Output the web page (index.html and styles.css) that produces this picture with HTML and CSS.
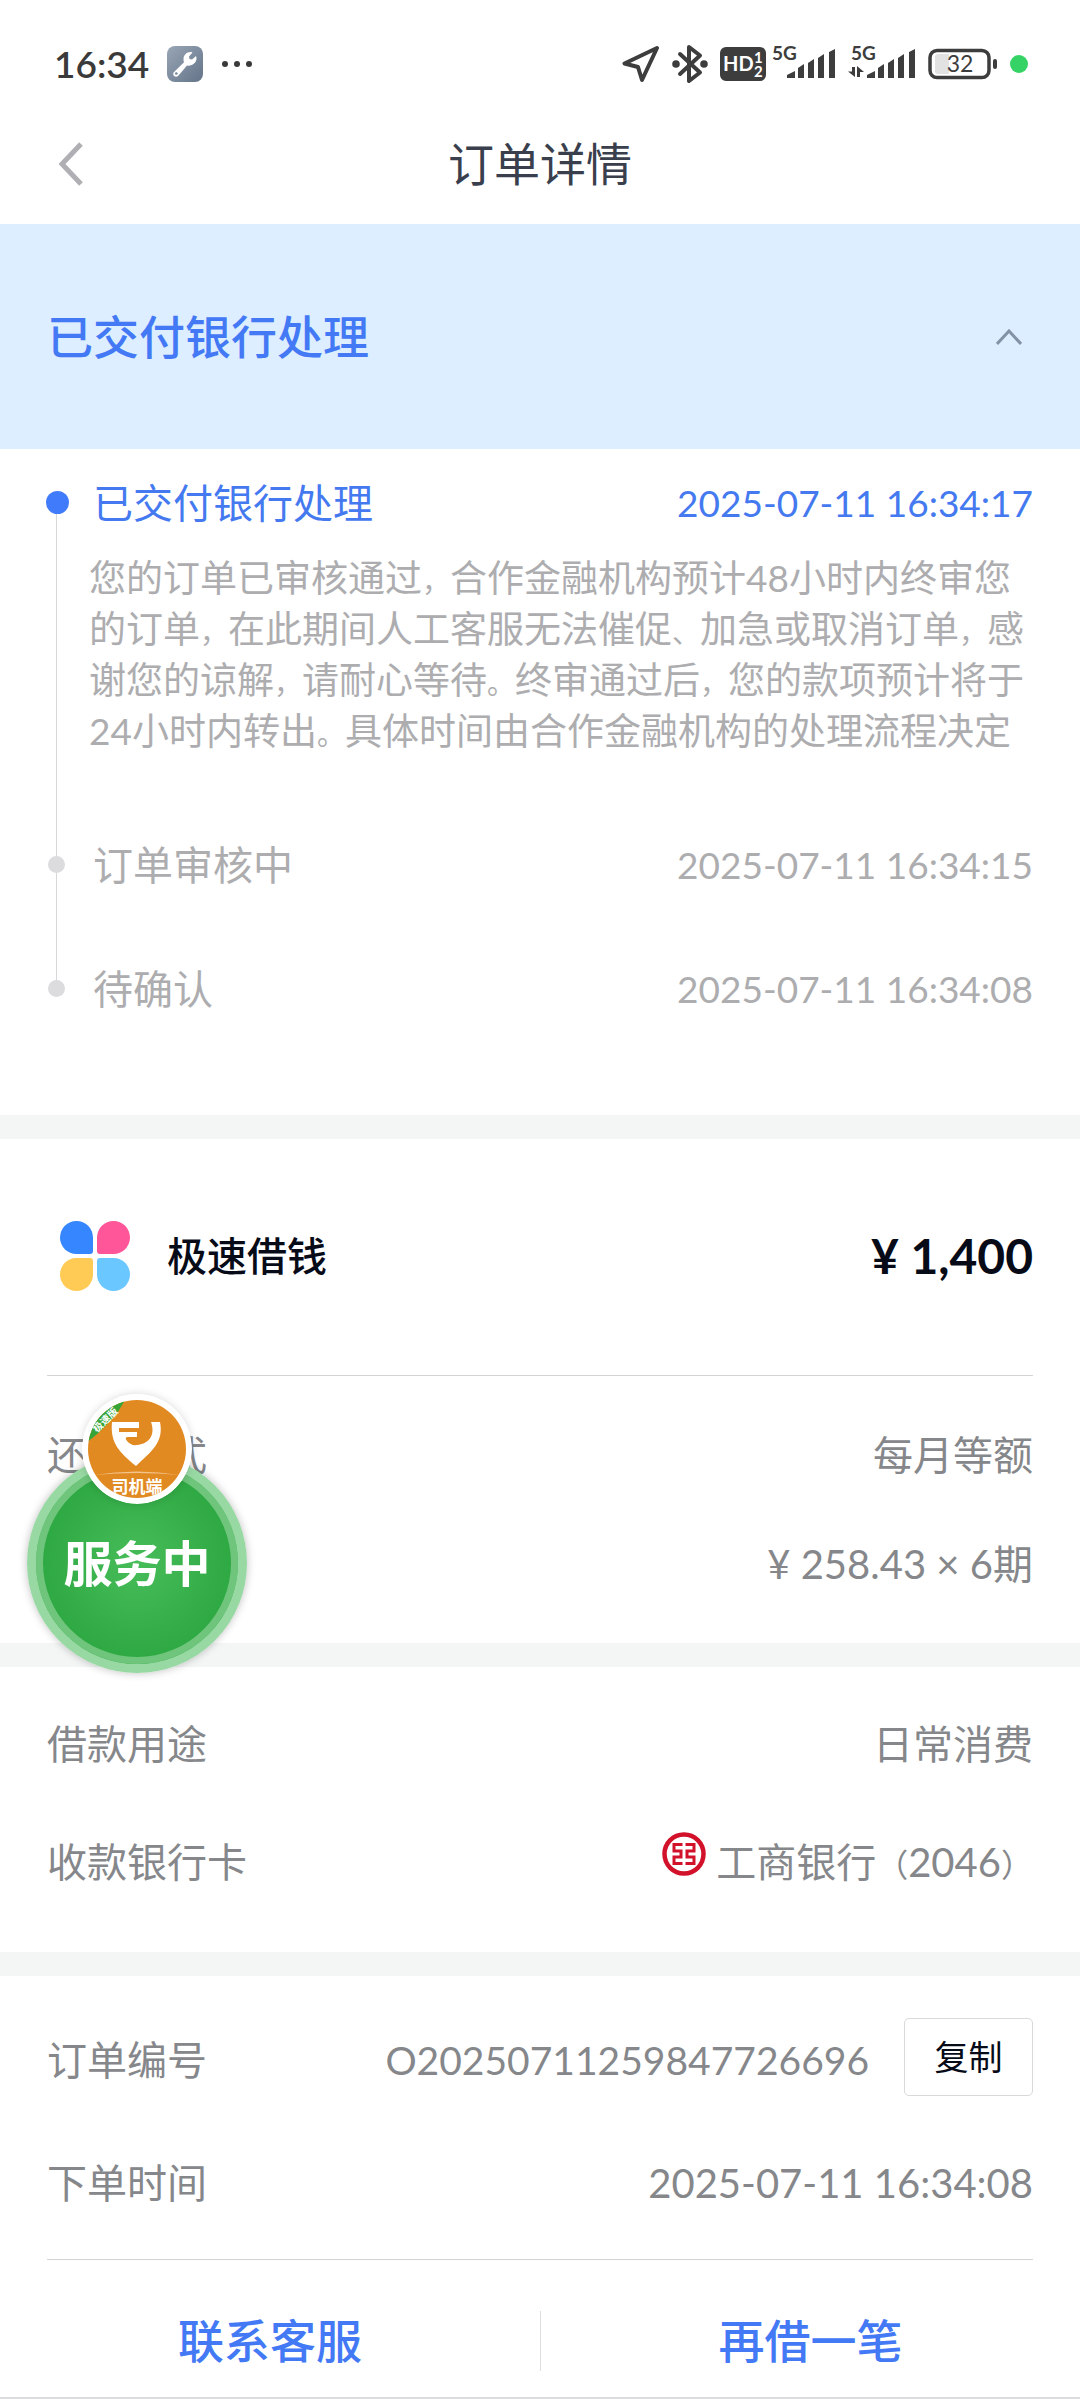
FILE: index.html
```html
<!DOCTYPE html>
<html lang="zh-CN">
<head>
<meta charset="utf-8">
<meta name="viewport" content="width=device-width, initial-scale=1">
<title>订单详情</title>
<link rel="stylesheet" href="styles.css">
</head>
<body>
<div class="statusbar">
  <div class="status-left">
    <span class="clock">16:34</span>
    <svg class="tool" width="36" height="36" viewBox="0 0 36 36" aria-hidden="true">
      <defs><linearGradient id="steel" x1="0" y1="0" x2="1" y2="1"><stop offset="0" stop-color="#98a6b6"/><stop offset="1" stop-color="#647488"/></linearGradient></defs>
      <rect width="36" height="36" rx="8" fill="url(#steel)"/>
      <path d="M25.500 6.500C21.500 5 16.500 8 16.500 13C16.500 14.500 16.700 15.500 17 16.300L7 26C4.500 29 8.500 32.500 11.500 29.500L20 19.500C24.500 20.500 29.500 17 29.500 12.500C29.500 11.500 29.300 10.700 29 10L25 13.500L22.500 13L22 10.500Z" fill="#fff"/>
      <circle cx="9.300" cy="27.500" r="1.300" fill="#74859a"/>
    </svg>
    <svg width="32" height="8" viewBox="0 0 32 8" fill="#3a3a3a" aria-hidden="true"><circle cx="4" cy="4" r="3"/><circle cx="16" cy="4" r="3"/><circle cx="28" cy="4" r="3"/></svg>
  </div>
  <div class="status-right">
    <svg width="38" height="38" viewBox="0 0 38 38" fill="none" stroke="#3d3d3d" stroke-width="4" stroke-linejoin="round" aria-hidden="true"><path d="M35 3L2.500 18.500L16 22L20 35Z"/></svg>
    <svg width="36" height="40" viewBox="0 0 36 40" fill="none" stroke="#3d3d3d" stroke-width="4" stroke-linecap="round" stroke-linejoin="round" aria-hidden="true"><path d="M8 10L28 28.500L17 37V3L28 11.500L8 30"/><circle cx="4" cy="20" r="1.800" fill="#3d3d3d"/><circle cx="32" cy="20" r="1.800" fill="#3d3d3d"/></svg>
    <div class="signal">
      <svg width="46" height="36" viewBox="0 0 46 36" class="hd"><rect y="1" width="46" height="34" rx="6" fill="#3d3d3d"/><text x="3" y="25" font-size="20">HD</text><text x="34" y="17" font-size="15">1</text><text x="34" y="31" font-size="15">2</text></svg>
      <svg width="64" height="44" viewBox="0 -4 64 44" class="bars"><text x="0" y="14" font-size="19">5G</text><path d="M15 32V29L23 25V32ZM26 32V22L32 18V32ZM36 32V17L42 13V32ZM46 32V12L52 8V32ZM57 32V6L63 3V32Z"/></svg>
    </div>
    <svg width="68" height="44" viewBox="0 -4 68 44" class="bars"><text x="3" y="14" font-size="19">5G</text><path d="M19 32V29L27 25V32ZM30 32V22L36 18V32ZM40 32V17L46 13V32ZM50 32V12L56 8V32ZM61 32V6L67 3V32ZM4 21H7V31L0 25.500H4ZM9 31V20L16 26H12V31Z"/></svg>
    <svg width="70" height="36" viewBox="0 0 70 36" aria-hidden="true"><rect x="2" y="4.500" width="59" height="27" rx="7" fill="none" stroke="#3d3d3d" stroke-width="3.500"/><path d="M7 11Q7 8 10 8H21V28H10Q7 28 7 25Z" fill="#e2e2e2"/><rect x="65" y="13" width="4" height="10" rx="2" fill="#3d3d3d"/><text x="32" y="26" font-size="23" text-anchor="middle" fill="#3d3d3d">32</text></svg>
    <span class="live"></span>
  </div>
</div>

<header class="titlebar">
  <button class="back" type="button" aria-label="返回"><svg width="26" height="44" viewBox="0 0 26 44" fill="none" stroke="#b0b0b4" stroke-width="5"><path d="M23 2L4 22L23 42"/></svg></button>
  <h1>订单详情</h1>
</header>

<main>
  <section class="banner">
    <h2>已交付银行处理</h2>
    <button type="button" aria-label="收起"><svg width="26" height="16" viewBox="0 0 26 16" fill="none" stroke="#8393a3" stroke-width="3"><path d="M1 15L13 2L25 15"/></svg></button>
  </section>

  <ol class="timeline">
    <li class="current">
      <div class="step"><span>已交付银行处理</span><time>2025-07-11 16:34:17</time></div>
      <p>您的订单已审核通过<span class="punct">，</span>合作金融机构预计48小时内终审您<br>的订单<span class="punct">，</span>在此期间人工客服无法催促<span class="punct">、</span>加急或取消订单<span class="punct">，</span>感<br>谢您的谅解<span class="punct">，</span>请耐心等待<span class="punct">。</span>终审通过后<span class="punct">，</span>您的款项预计将于<br>24小时内转出<span class="punct">。</span>具体时间由合作金融机构的处理流程决定</p>
    </li>
    <li><div class="step"><span>订单审核中</span><time>2025-07-11 16:34:15</time></div></li>
    <li><div class="step"><span>待确认</span><time>2025-07-11 16:34:08</time></div></li>
  </ol>

  <section class="panel loan">
    <div class="product">
      <svg width="70" height="70" viewBox="0 0 70 70" aria-hidden="true">
        <path d="M16.500 0A16.500 16.500 0 0 1 33 16.500V30Q33 33 30 33H16.500A16.500 16.500 0 0 1 16.500 0Z" fill="#3586ff"/>
        <path d="M53.500 0A16.500 16.500 0 0 1 53.500 33H40Q37 33 37 30V16.500A16.500 16.500 0 0 1 53.500 0Z" fill="#ff5599"/>
        <path d="M16.500 37H30Q33 37 33 40V53.500A16.500 16.500 0 1 1 16.500 37Z" fill="#ffcb55"/>
        <path d="M53.500 37H40Q37 37 37 40V53.500A16.500 16.500 0 1 0 53.500 37Z" fill="#6bc7ff"/>
      </svg>
      <strong class="name">极速借钱</strong>
      <strong class="amount">¥ 1,400</strong>
    </div>
    <div class="row first"><span>还款方式</span><span>每月等额</span></div>
    <div class="row second"><span class="end">¥ 258.43 × 6期</span></div>
    <button class="floater" type="button">
      <span class="disc">服务中</span>
      <svg class="app" width="110" height="110" viewBox="0 0 110 110">
        <defs><clipPath id="round"><circle cx="55" cy="55" r="49"/></clipPath></defs>
        <circle cx="55" cy="55" r="55" fill="#fff"/>
        <g clip-path="url(#round)">
          <rect width="110" height="110" fill="#e28a22"/>
          <path d="M0 0H46Q34 28 0 52Z" fill="#36a537"/>
          <text x="15" y="39" font-size="10" transform="rotate(-44 15 39)">极速版</text>
          <path d="M12 81Q55 74 98 81Q55 77 12 81Z" fill="#f3c48b"/>
          <text x="55" y="99" font-size="17" text-anchor="middle">司机端</text>
        </g>
        <path d="M30 28H57V34H37V38H55V43H46Q42 43 45 47Q49 52 55 51C66 50 74 42 69 28H78C82 48 70 57 54 72C37 58 28 49 30 28Z" fill="#fff"/>
      </svg>
    </button>
  </section>

  <section class="panel usage">
    <div class="row"><span>借款用途</span><span>日常消费</span></div>
    <div class="row"><span>收款银行卡</span>
      <span class="bank"><svg width="44" height="44" viewBox="0 0 44 44" fill="none" stroke="#d2122b" aria-hidden="true"><circle cx="22" cy="22" r="19.500" stroke-width="4.500"/><path d="M20.500 12.500H12V19H19V25H12V31.500H20.500M23.500 12.500H32V19H25V25H32V31.500H23.500" stroke-width="3"/></svg><span>工商银行<span class="paren">（</span>2046<span class="paren">）</span></span></span>
    </div>
  </section>

  <section class="panel order">
    <div class="row"><span>订单编号</span><span class="number">O20250711259847726696</span><button class="copy" type="button">复制</button></div>
    <div class="row"><span>下单时间</span><time>2025-07-11 16:34:08</time></div>
  </section>
</main>

<footer class="actions">
  <button type="button">联系客服</button>
  <button type="button">再借一笔</button>
</footer>
</body>
</html>
```
FILE: styles.css
```css
* { box-sizing: border-box; }

body {
  margin: 0;
  background: #fff;
  color: #85878b;
  font-family: Lato, "Noto Sans CJK SC", sans-serif;
  font-size: 40px;
  line-height: 60px;
}

h1, h2, p, ol { margin: 0; padding: 0; }
ol { list-style: none; }
svg { display: block; flex: none; }

button {
  margin: 0;
  padding: 0;
  border: 0;
  background: none;
  font: inherit;
  cursor: pointer;
}

/* status bar */
.statusbar {
  display: flex;
  align-items: center;
  justify-content: space-between;
  height: 128px;
  padding: 0 52px 0 54px;
  color: #3a3a3a;
}
.status-left { display: flex; align-items: center; gap: 18px; }
.status-right { display: flex; align-items: center; gap: 12px; }
.clock { font-size: 37px; font-weight: 600; }
.signal { display: flex; align-items: center; gap: 6px; }
.hd text { fill: #fff; font-weight: 700; }
.bars { fill: #3d3d3d; }
.bars text { font-weight: 700; }
.live { width: 18px; height: 18px; border-radius: 50%; background: #35d366; }

/* title bar */
.titlebar {
  display: grid;
  grid-template-columns: 1fr auto 1fr;
  align-items: center;
  height: 96px;
  padding: 0 58px 24px;
}
.titlebar h1 { color: #3a3f4d; font-size: 46px; font-weight: 400; }
.back { justify-self: start; }

.banner {
  display: flex;
  align-items: center;
  justify-content: space-between;
  height: 225px;
  padding: 0 58px 0 47px;
  background: #dceeff;
}
.banner h2 { color: #4479f5; font-size: 46px; font-weight: 500; }

/* progress */
.timeline {
  padding: 24px 47px 96px 48px;
  color: #adadb0;
}
.timeline li {
  position: relative;
  min-height: 124px;
  padding-left: 45px;
}
.timeline li.current { min-height: 362px; }
.timeline li:last-child { min-height: 60px; }
.timeline li::before {
  content: "";
  position: absolute;
  left: 8px;
  top: 30px;
  bottom: -30px;
  width: 1px;
  background: #d8d8da;
}
.timeline li:last-child::before { display: none; }
.timeline li::after {
  content: "";
  position: absolute;
  left: 0;
  top: 21px;
  width: 17px;
  height: 17px;
  border-radius: 50%;
  background: #dcdcde;
}
.timeline li.current::after {
  left: -2px;
  top: 18px;
  width: 23px;
  height: 23px;
  background: #3f7bfb;
}
.step { display: flex; justify-content: space-between; }
.step time { font-size: 37px; }
.current .step { color: #4479f0; }
.timeline p {
  margin: 19px -8px 0 -4px;
  font-size: 37px;
  line-height: 51px;
  white-space: nowrap;
}
.punct { font-size: 28px; line-height: 1; }
.paren { font-size: 32px; line-height: 1; }

/* panels */
.panel {
  border-top: 24px solid #f4f5f5;
  padding: 0 47px;
}
.row { display: flex; justify-content: space-between; }
.end { margin-left: auto; }

.loan { position: relative; height: 528px; }
.product {
  display: flex;
  align-items: center;
  height: 237px;
  padding: 0 0 2px 13px;
  border-bottom: 1px solid #d4d4d6;
}
.product strong { color: #070b18; }
.name { margin-left: 37px; font-weight: 500; }
.amount { margin-left: auto; font-size: 48px; font-weight: 700; }
.first { padding-top: 49px; }
.second { padding-top: 49px; }

/* floating service bubble */
.floater {
  position: absolute;
  left: 27px;
  top: 255px;
  width: 220px;
  height: 279px;
}
.disc {
  position: absolute;
  left: 0;
  bottom: 0;
  width: 220px;
  height: 220px;
  border: 9px solid #98d9a3;
  border-radius: 50%;
  background: radial-gradient(circle, #47bd59 0, #2fa943 94px);
  box-shadow: inset 0 0 0 7px #6fc57c, 0 0 8px rgba(0, 0, 0, .25);
  color: #fff;
  font-size: 49px;
  font-weight: 700;
  line-height: 202px;
}
.app {
  position: absolute;
  left: 55px;
  top: 0;
  border-radius: 50%;
  box-shadow: 0 0 8px rgba(0, 0, 0, .15);
}
.app text { fill: #fff; font-weight: 700; }

.usage { padding-top: 47px; padding-bottom: 60px; }
.usage .row + .row { margin-top: 58px; }
.bank { display: flex; gap: 10px; }

.order { padding-top: 42px; }
.order .row { align-items: center; }
.order .row > span { padding-top: 6px; }
.order .row + .row {
  height: 111px;
  margin-top: 53px;
  padding-bottom: 49px;
  border-bottom: 1px solid #d4d4d6;
}
.order time { padding-top: 6px; }
.number { margin-left: auto; font-size: 39px; }
.copy {
  width: 129px;
  height: 78px;
  margin-left: 35px;
  border: 1px solid #d9d9db;
  border-radius: 5px;
  color: #070b18;
  font-size: 34px;
}

.actions {
  display: grid;
  grid-template-columns: 1fr 1fr;
  padding: 51px 0 26px;
  border-bottom: 2px solid #dcdcde;
}
.actions button {
  height: 60px;
  color: #4479f5;
  font-size: 46px;
  font-weight: 500;
}
.actions button + button { border-left: 1px solid #dedee0; }
```
